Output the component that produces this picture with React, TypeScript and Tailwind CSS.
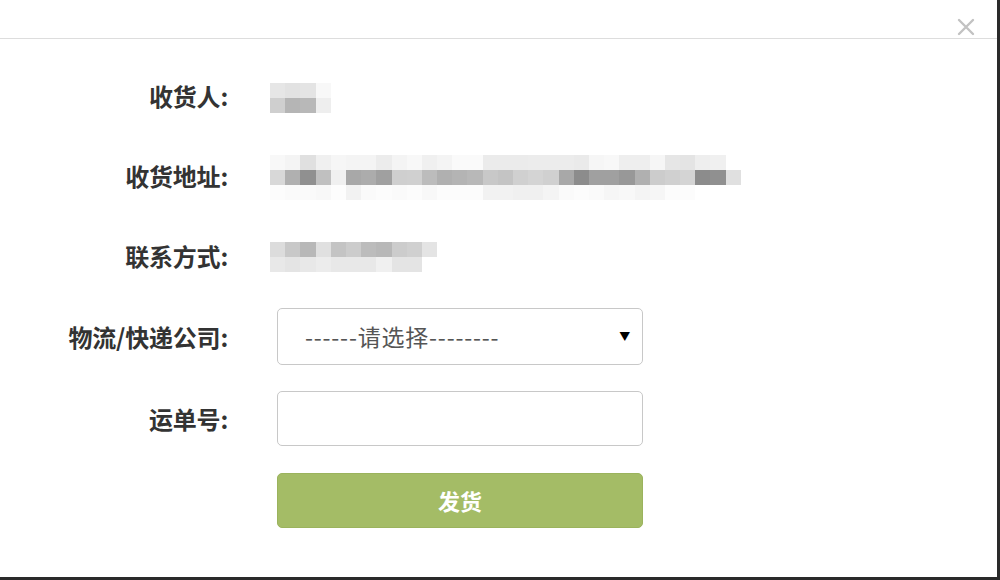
import React from 'react';

// blurred (pixelated) personal data, one array of greys per row
const receiver = [
  ['#e6e6e6', '#e2e2e2', '#e4e4e4', '#f8f8f8'],
  ['#cfcfcf', '#b5b5b5', '#b8b8b8', '#eeeeee'],
];

const address = [
  ['#f8f8f8', '#f4f4f4', '#e0e0e0', '#f0f0f0', '#f6f6f6', '#f4f4f4', '#f4f4f4', '#ececec', '#f4f4f4', '#f8f8f8', '#f0f0f0', '#f4f4f4', '#fafafa', '#fafafa', '#ebebeb', '#ebebeb', '#ebebeb', '#ececec', '#ececec', '#ececec', '#eaeaea', '#f6f6f6', '#f8f8f8', '#eeeeee', '#eeeeee', '#f6f6f6', '#e6e6e6', '#e4e4e4', '#eeeeee', '#f0f0f0', '#ffffff'],
  ['#d8d8d8', '#b0b0b0', '#909090', '#c0c0c0', '#f0f0f0', '#a8a8a8', '#acacac', '#a0a0a0', '#cfcfcf', '#d0d0d0', '#bcbcbc', '#b0b0b0', '#b4b4b4', '#b8b8b8', '#c8c8c8', '#c4c4c4', '#d0d0d0', '#d4d4d4', '#d0d0d0', '#a8a8a8', '#8c8c8c', '#a0a0a0', '#a0a0a0', '#989898', '#b0b0b0', '#cccccc', '#d0d0d0', '#d4d4d4', '#8c8c8c', '#909090', '#e0e0e0'],
  ['#fcfcfc', '#fafafa', '#fafafa', '#f8f8f8', '#fdfdfd', '#f2f2f2', '#fafafa', '#fcfcfc', '#fafafa', '#fcfcfc', '#f8f8f8', '#fcfcfc', '#fcfcfc', '#fcfcfc', '#f2f2f2', '#f2f2f2', '#f0f0f0', '#f0f0f0', '#f4f4f4', '#fafafa', '#fcfcfc', '#fafafa', '#f6f6f6', '#f8f8f8', '#f4f4f4', '#f6f6f6', '#fcfcfc', '#fcfcfc', '#ffffff', '#ffffff', '#ffffff'],
];

const phone = [
  ['#dcdcdc', '#c8c8c8', '#b8b8b8', '#e0e0e0', '#c4c4c4', '#cccccc', '#bcbcbc', '#b8b8b8', '#cccccc', '#d0d0d0', '#e4e4e4'],
  ['#e8e8e8', '#e4e4e4', '#e8e8e8', '#ececec', '#e8e8e8', '#e8e8e8', '#e8e8e8', '#f0f0f0', '#e4e4e4', '#e4e4e4', '#ffffff'],
];

function Blurred({ rows }: { rows: string[][] }) {
  return (
    <div className="flex flex-col blur-[0.6px]">
      {rows.map((row, i) => (
        <div key={i} className="flex">
          {row.map((c, j) => (
            <div key={j} className="w-[15.2px] h-[15px]" style={{ backgroundColor: c }} />
          ))}
        </div>
      ))}
    </div>
  );
}

function Label({ text }: { text: string }) {
  return (
    <div className="w-[228px] shrink-0 text-right text-[24px] font-bold text-[#333] leading-none tracking-[-0.2px]">
      {text}
    </div>
  );
}

export default function App() {
  return (
    <div
      className="w-[1000px] h-[580px] bg-white border-r-[3px] border-b-[3px] border-[#2a2a2a] box-border flex flex-col"
      style={{ fontFamily: '"Noto Sans CJK SC", "Noto Sans", sans-serif' }}
    >
      <div className="h-[39px] shrink-0 border-b border-[#dddddd] flex justify-end items-end pr-[22px] pb-[1px]">
        <svg width="18" height="18" viewBox="0 0 18 18" className="mb-[1px]">
          <path d="M2 2 L16 16 M16 2 L2 16" stroke="#c2c2c2" strokeWidth="2.4" strokeLinecap="round" />
        </svg>
      </div>

      <div className="pt-[17px] flex flex-col">
        <div className="h-[80px] flex items-center">
          <Label text="收货人:" />
          <div className="ml-[42px] pt-[4px]">
            <Blurred rows={receiver} />
          </div>
        </div>

        <div className="h-[80px] flex items-center">
          <Label text="收货地址:" />
          <div className="ml-[42px] pt-[2px]">
            <Blurred rows={address} />
          </div>
        </div>

        <div className="h-[80px] flex items-center">
          <Label text="联系方式:" />
          <div className="ml-[42px] pt-[2px]">
            <Blurred rows={phone} />
          </div>
        </div>

        <div className="mt-[12px] flex items-center">
          <Label text="物流/快递公司:" />
          <div className="ml-[49px] w-[366px] h-[57px] border border-[#c8c8c8] rounded-[5px] flex items-center justify-between pl-[27px] pr-[11px] text-[23px] text-[#555] tracking-[0.8px]">
            <span>------请选择--------</span>
            <span className="text-[11px] text-black">▼</span>
          </div>
        </div>

        <div className="mt-[26px] flex items-center">
          <Label text="运单号:" />
          <input
            type="text"
            className="ml-[49px] w-[366px] h-[55px] border border-[#c8c8c8] rounded-[5px] px-3 outline-none"
          />
        </div>

        <div className="mt-[27px] flex">
          <div className="w-[228px] shrink-0" />
          <button className="ml-[49px] w-[366px] h-[55px] bg-[#a4bc66] border border-[#9bb35d] rounded-[5px] text-white text-[22px] font-bold">
            发货
          </button>
        </div>
      </div>
    </div>
  );
}
